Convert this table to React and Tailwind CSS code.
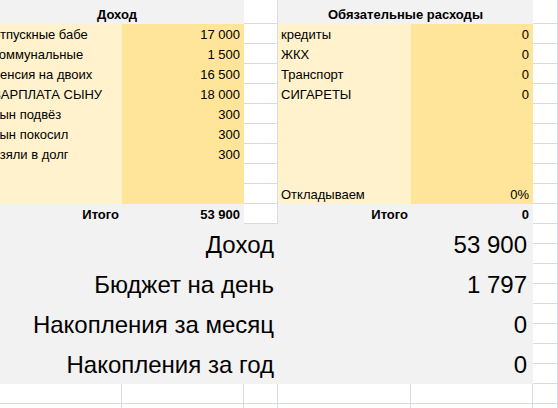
import React from 'react';

const income = [
  ['отпускные бабе', '17 000'],
  ['коммунальные', '1 500'],
  ['пенсия на двоих', '16 500'],
  ['ЗАРПЛАТА СЫНУ', '18 000'],
  ['сын подвёз', '300'],
  ['сын покосил', '300'],
  ['взяли в долг', '300'],
  ['', ''],
  ['', ''],
];

const expenses = [
  ['кредиты', '0'],
  ['ЖКХ', '0'],
  ['Транспорт', '0'],
  ['СИГАРЕТЫ', '0'],
  ['', ''],
  ['', ''],
  ['', ''],
  ['', ''],
  ['Откладываем', '0%'],
];

const summary = [
  ['Доход', '53 900'],
  ['Бюджет на день', '1 797'],
  ['Накопления за месяц', '0'],
  ['Накопления за год', '0'],
];

const line = 'border-b border-r border-[#d6dce6]';
const cell = 'flex items-end leading-[15px] pb-[2px] px-[3px] whitespace-nowrap overflow-hidden';

function App() {
  return (
    <div className="w-[558px] h-[408px] overflow-hidden bg-white text-black font-['Liberation_Sans',Arial,sans-serif] text-[13px]">
      <div className="ml-[-10px] grid grid-cols-[132px_122px_34px_133px_122px_25px] grid-rows-[24px_repeat(20,20px)]">
        {/* Header */}
        <div className={`${cell} col-span-2 justify-center bg-[#f2f2f2] font-bold`}>Доход</div>
        <div className={line} />
        <div className={`${cell} col-span-2 justify-center bg-[#f2f2f2] font-bold`}>Обязательные расходы</div>
        <div className={line} />

        {/* Rows */}
        {income.map((row, i) => (
          <React.Fragment key={i}>
            <div className={`${cell} bg-[#fff2cc]`}>{row[0]}</div>
            <div className={`${cell} justify-end pr-[4px] bg-[#ffe599]`}>{row[1]}</div>
            <div className={line} />
            <div className={`${cell} bg-[#fff2cc]`}>{expenses[i][0]}</div>
            <div className={`${cell} justify-end pr-[4px] bg-[#ffe599]`}>{expenses[i][1]}</div>
            <div className={line} />
          </React.Fragment>
        ))}

        {/* Totals */}
        <div className={`${cell} justify-end bg-[#f2f2f2] font-bold`}>Итого</div>
        <div className={`${cell} justify-end pr-[4px] bg-[#f2f2f2] font-bold`}>53 900</div>
        <div className={line} />
        <div className={`${cell} justify-end bg-[#f2f2f2] font-bold`}>Итого</div>
        <div className={`${cell} justify-end pr-[4px] bg-[#f2f2f2] font-bold`}>0</div>
        <div className={line} />

        {/* Summary */}
        {summary.map(([label, value]) => (
          <React.Fragment key={label}>
            <div className="col-span-3 row-span-2 flex items-end justify-end bg-[#f2f2f2] pr-[4px] pb-[5px] text-[24px] leading-[28px] whitespace-nowrap">
              {label}
            </div>
            <div className="col-span-2 row-span-2 flex items-end justify-end bg-[#f2f2f2] pr-[6px] pb-[5px] text-[24px] leading-[28px]">
              {value}
            </div>
            <div className={`col-start-6 ${line}`} />
            <div className={`col-start-6 ${line}`} />
          </React.Fragment>
        ))}

        {/* Empty rows */}
        {[0, 1].map((r) => (
          <React.Fragment key={r}>
            <div className={line} />
            <div className={line} />
            <div className={line} />
            <div className={line} />
            <div className={line} />
            <div className={line} />
          </React.Fragment>
        ))}
      </div>
    </div>
  );
}

export default App;
